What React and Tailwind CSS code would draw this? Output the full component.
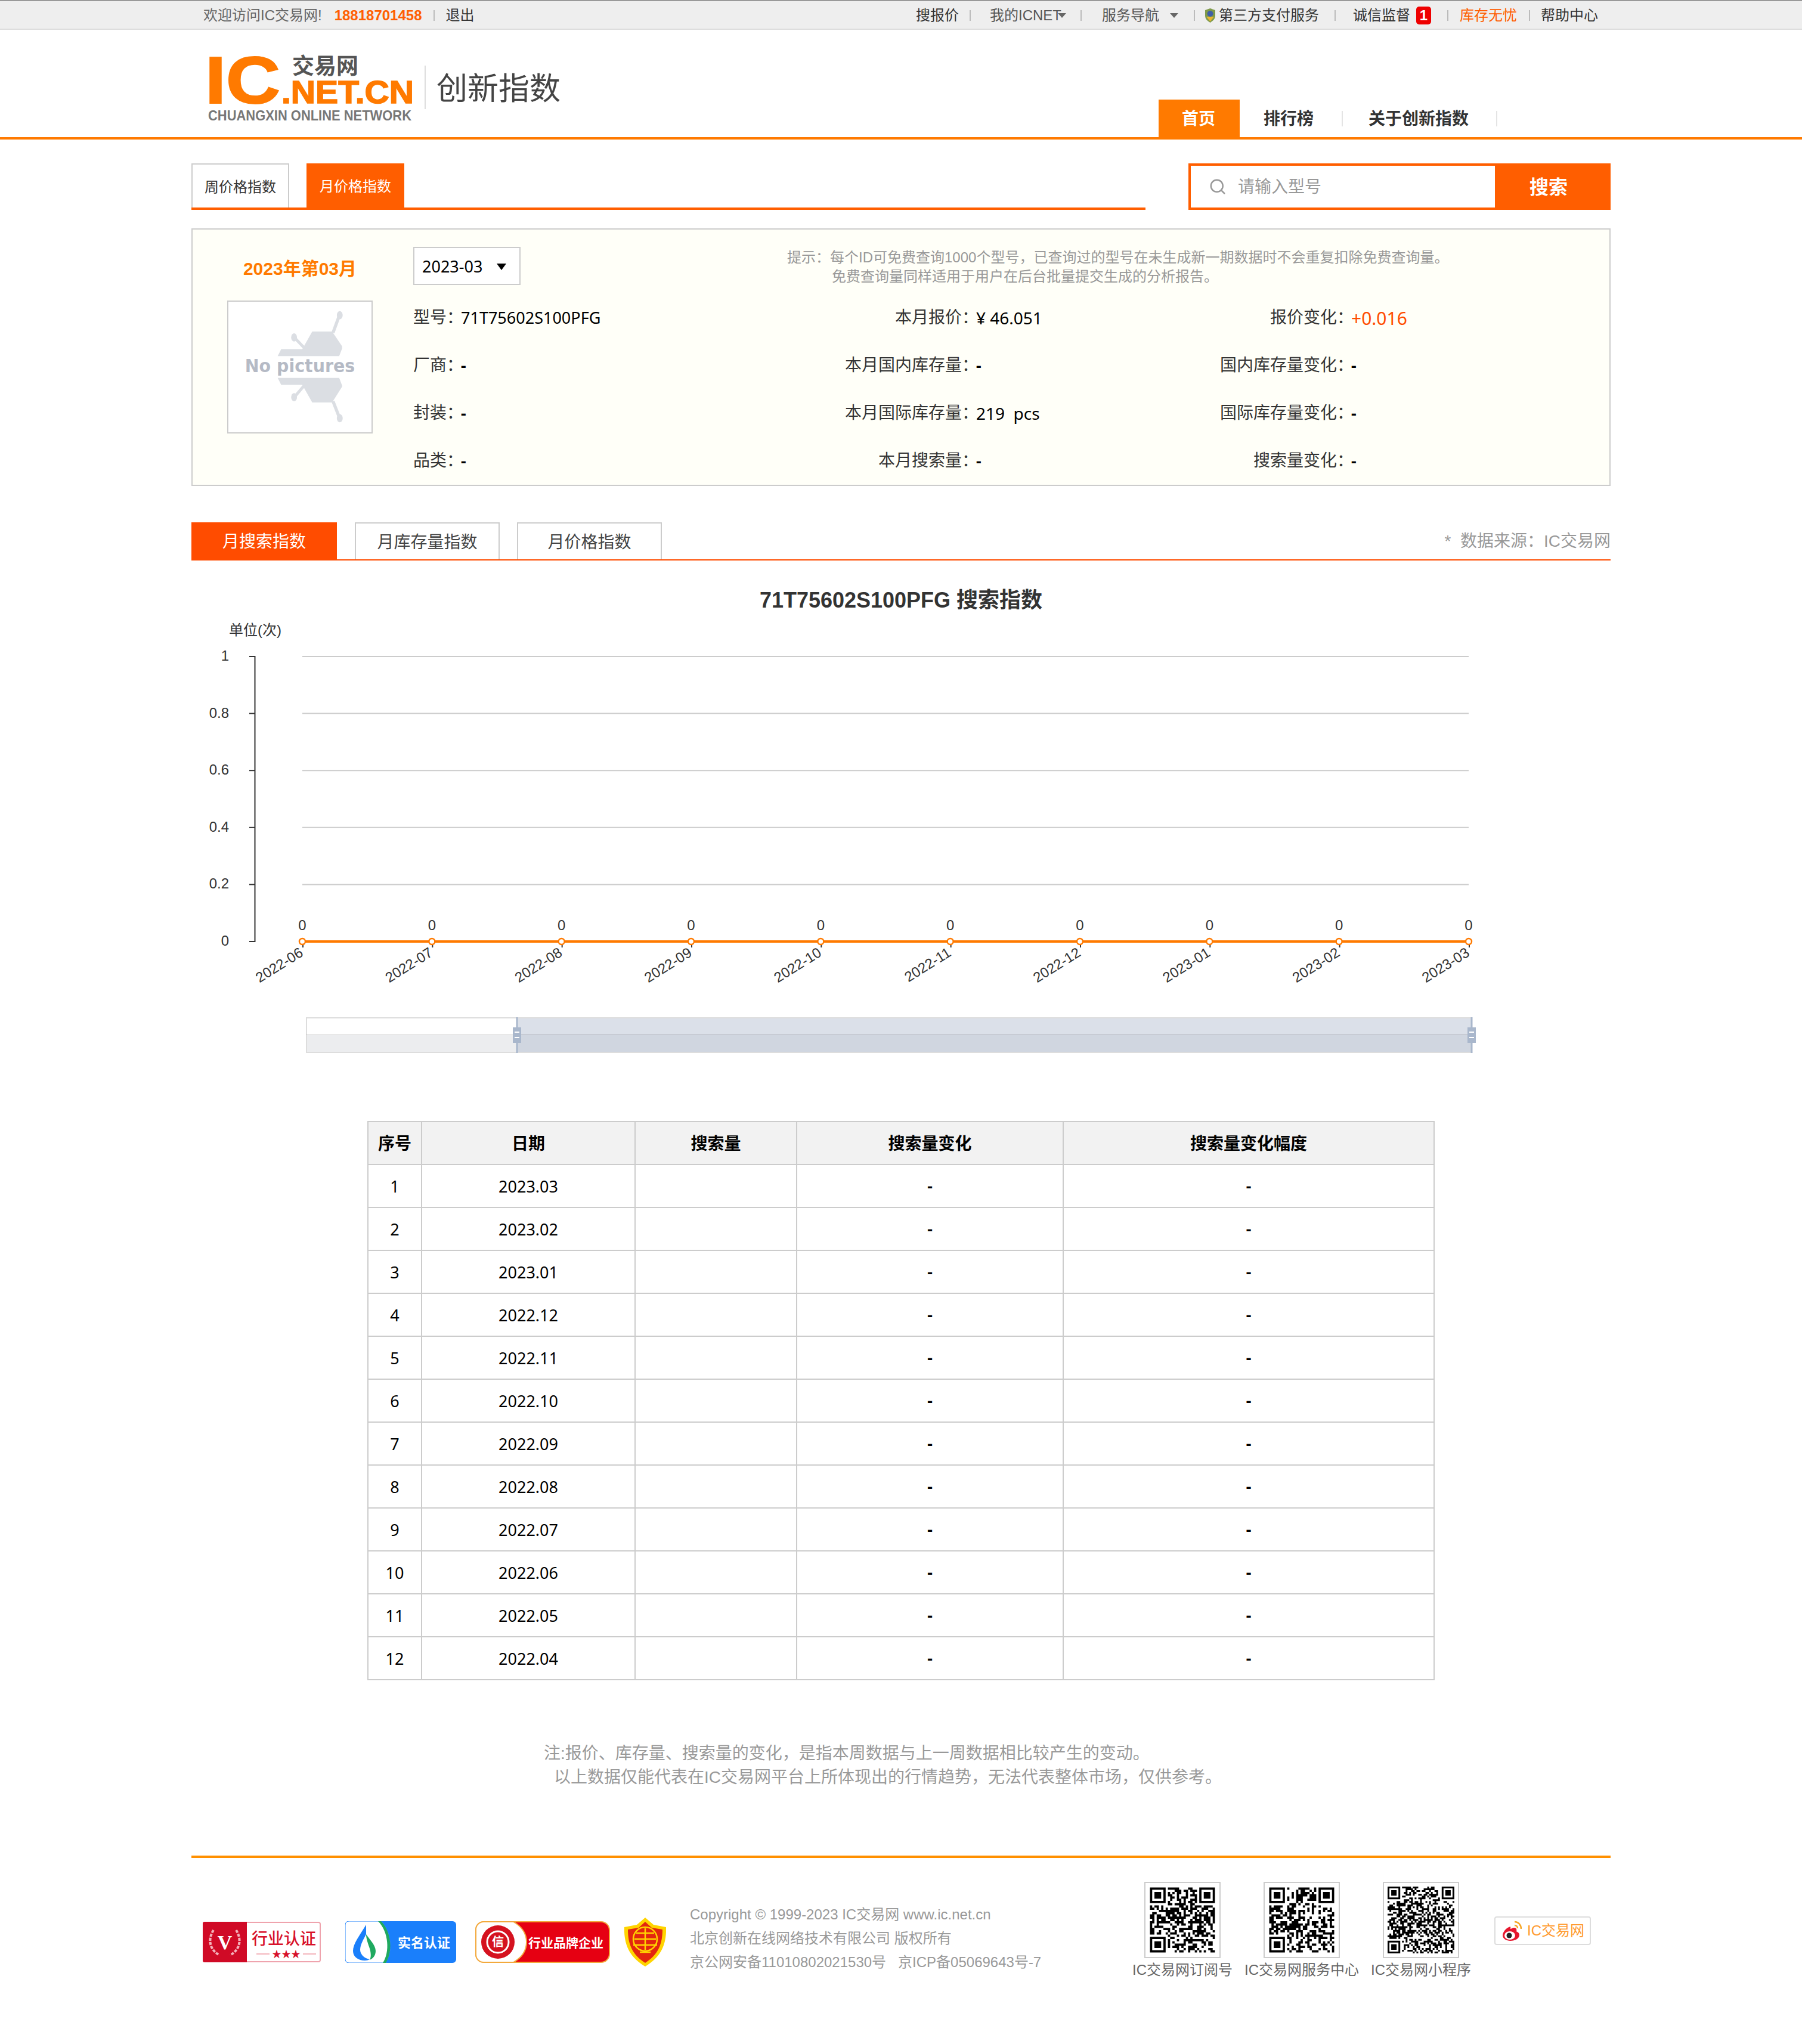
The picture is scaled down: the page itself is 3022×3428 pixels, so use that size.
import { Search } from 'lucide-react';

const ROWS = [
  ['型号\uFF1A', '71T75602S100PFG', '本月报价\uFF1A', '¥ 46.051', '报价变化\uFF1A', '+0.016'],
  ['厂商\uFF1A', '-', '本月国内库存量\uFF1A', '-', '国内库存量变化\uFF1A', '-'],
  ['封装\uFF1A', '-', '本月国际库存量\uFF1A', '219  pcs', '国际库存量变化\uFF1A', '-'],
  ['品类\uFF1A', '-', '本月搜索量\uFF1A', '-', '搜索量变化\uFF1A', '-'],
];
const DATES = ['2023.03', '2023.02', '2023.01', '2022.12', '2022.11', '2022.10', '2022.09', '2022.08', '2022.07', '2022.06', '2022.05', '2022.04'];
const MONTHS = ['2022-06', '2022-07', '2022-08', '2022-09', '2022-10', '2022-11', '2022-12', '2023-01', '2023-02', '2023-03'];
const Y_TICKS = [['1', 1101], ['0.8', 1196.6], ['0.6', 1292.2], ['0.4', 1387.8], ['0.2', 1483.4], ['0', 1579]];

const HINT_1 = '提示\uFF1A每个ID可免费查询1000个型号\uFF0C已查询过的型号在未生成新一期数据时不会重复扣除免费查询量。';
const HINT_2 = '免费查询量同样适用于用户在后台批量提交生成的分析报告。';
const NOTE_1 = '注:报价、库存量、搜索量的变化\uFF0C是指本周数据与上一周数据相比较产生的变动。';
const NOTE_2 = '以上数据仅能代表在IC交易网平台上所体现出的行情趋势\uFF0C无法代表整体市场\uFF0C仅供参考。';

function Sep({ className = '' }) {
  return <span className={`h-[18px] w-[2px] bg-[#bbb] ${className}`} />;
}

function Logo() {
  return (
    <svg width="371" height="148" viewBox="0 0 371 148" className="mt-[15px] ml-[20px] shrink-0">
      <text x="3" y="108" fontSize="112" fontWeight="700" fill="#ff7a00" stroke="#ff7a00" strokeWidth="2" textLength="126" lengthAdjust="spacingAndGlyphs">IC</text>
      <text x="131" y="108" fontSize="53" fontWeight="700" fill="#ff7a00" stroke="#ff7a00" strokeWidth="1.5" textLength="222" lengthAdjust="spacingAndGlyphs">.NET.CN</text>
      <text x="149" y="59" fontSize="37" fontWeight="700" fill="#555">交易网</text>
      <text x="8" y="137" fontSize="24" fontWeight="700" fill="#777" textLength="341" lengthAdjust="spacingAndGlyphs">CHUANGXIN ONLINE NETWORK</text>
    </svg>
  );
}

function NoPicture() {
  return (
    <svg width="244" height="223" viewBox="0 0 244 223" className="border-2 border-[#ccc] bg-white">
      <g fill="#dbdee3">
        <path d="M143 51h34l17 25v4l-5 13H84l6-12h36z" />
        <path d="M84 130h105l5 13v2l-17 27h-34l-17-30H90z" />
        <path d="M176 52l11-30 5 2-11 30zM127 80l-17-18 4-3 17 18zM176 171l11 28 5-2-11-28zM127 142l-17 20 4 3 17-20z" />
        <ellipse cx="190" cy="23" rx="5" ry="7" />
        <ellipse cx="112" cy="61" rx="5" ry="7" />
        <ellipse cx="112" cy="163" rx="5" ry="7" />
        <ellipse cx="190" cy="199" rx="5" ry="7" />
      </g>
      <text x="122" y="120" textAnchor="middle" fontSize="31" fontWeight="700" fill="#b5bac5" textLength="188" lengthAdjust="spacingAndGlyphs" className="font-['DejaVu_Sans',sans-serif]">No pictures</text>
    </svg>
  );
}

function Chart() {
  return (
    <svg width="2380" height="850" viewBox="321 940 2380 850" className="block">
      <text x="1511" y="1019" textAnchor="middle" fontSize="36" fontWeight="700" fill="#333">71T75602S100PFG 搜索指数</text>
      <text x="384" y="1065" fontSize="24" fill="#333">单位(次)</text>
      {Y_TICKS.map(([label, y]) => (
        <g key={label}>
          {label !== '0' && <line x1="507" x2="2463" y1={y} y2={y} stroke="#ccc" strokeWidth="2" />}
          <line x1="418" x2="428" y1={y} y2={y} stroke="#333" strokeWidth="2" />
          <text x="384" y={y + 7} textAnchor="end" fontSize="24" fill="#333">{label}</text>
        </g>
      ))}
      <line x1="427.5" x2="427.5" y1="1100" y2="1580" stroke="#333" strokeWidth="2" />
      <line x1="507" x2="2463" y1="1579" y2="1579" stroke="#ff7a00" strokeWidth="4" />
      {MONTHS.map((month, i) => {
        const x = 507 + i * 217.33;
        return (
          <g key={month}>
            <line x1={x + 1} x2={x + 1} y1="1579" y2="1589" stroke="#333" strokeWidth="2" />
            <circle cx={x} cy="1579" r="5" fill="#fff" stroke="#ff7a00" strokeWidth="2.5" />
            <text x={x} y="1560" textAnchor="middle" fontSize="24" fill="#333">0</text>
            <text x={x + 3} y="1602" textAnchor="end" fontSize="24" fill="#333" transform={`rotate(-32 ${x + 3} 1602)`}>{month}</text>
          </g>
        );
      })}
      {/* data zoom */}
      <rect x="514" y="1707" width="953" height="29" fill="#fff" />
      <rect x="514" y="1736" width="953" height="29" fill="#ecedef" />
      <rect x="867" y="1707" width="1600" height="29" fill="#dbe0e9" />
      <rect x="867" y="1736" width="1600" height="29" fill="#d0d6e0" />
      <rect x="514" y="1707" width="1954" height="58" fill="none" stroke="#ddd" strokeWidth="2" />
      <line x1="514" x2="2467" y1="1735" y2="1735" stroke="#000" strokeOpacity="0.09" strokeWidth="2" />
      {[867, 2468].map((x) => (
        <g key={x}>
          <rect x={x - 1.5} y="1706" width="3" height="60" fill="#a9b7cc" />
          <rect x={x - 7} y="1723" width="14" height="26" fill="#a9b7cc" />
          <rect x={x - 4} y="1730" width="8" height="2" fill="#fff" />
          <rect x={x - 4} y="1739" width="8" height="2" fill="#fff" />
        </g>
      ))}
    </svg>
  );
}

function QrCode({ modules, seed }) {
  let state = seed;
  const rand = () => {
    state = (state * 1103515245 + 12345) % 2147483648;
    return (state >> 12) % 100;
  };
  const inFinder = (x, y) =>
    (x < 8 && y < 8) || (x >= modules - 8 && y < 8) || (x < 8 && y >= modules - 8);
  let d = '';
  for (let y = 0; y < modules; y++) {
    for (let x = 0; x < modules; x++) {
      if (!inFinder(x, y) && rand() < 50) d += `M${x} ${y}h1v1h-1z`;
    }
  }
  const finder = [[0, 0], [modules - 7, 0], [0, modules - 7]];
  return (
    <svg width="128" height="128" viewBox={`-2 -2 ${modules + 4} ${modules + 4}`} className="border-2 border-[#ccc] bg-white">
      <path d={d} fill="#000" />
      {finder.map(([x, y]) => (
        <path key={`${x}-${y}`} fillRule="evenodd" d={`M${x} ${y}h7v7h-7zM${x + 1} ${y + 1}v5h5v-5zM${x + 2} ${y + 2}h3v3h-3z`} fill="#000" />
      ))}
    </svg>
  );
}

function Badges() {
  return (
    <>
      <svg width="198" height="68" viewBox="0 0 198 68" className="mt-[107px] ml-[19px] shrink-0">
        <rect x="1" y="1" width="196" height="66" rx="3" fill="#fff" stroke="#efa3ad" strokeWidth="2" />
        <path d="M3 0h71v68H3a3 3 0 0 1-3-3V3a3 3 0 0 1 3-3z" fill="#d00a26" />
        <path d="M18 14c-9 14-8 32 10 42M56 14c9 14 8 32-10 42" fill="none" stroke="#f3b3bb" strokeWidth="4" strokeDasharray="5 2" />
        <text x="37" y="46" textAnchor="middle" fontSize="34" fontWeight="700" fill="#fff" className="font-['Liberation_Serif',serif]">V</text>
        <text x="82" y="38" fontSize="27" fontWeight="500" fill="#d8112a">行业认证</text>
        <path d="M90 54h22M168 54h22" stroke="#f4b5bd" strokeWidth="2" />
        <text x="140" y="60" textAnchor="middle" fontSize="16" fill="#d8112a">★★★</text>
      </svg>
      <svg width="186" height="70" viewBox="0 0 186 70" className="mt-[106px] ml-[41px] shrink-0">
        <rect width="186" height="70" rx="6" fill="#1a7ffb" />
        <path d="M6 0h54c18 18 20 52 8 70H6a6 6 0 0 1-6-6V6a6 6 0 0 1 6-6z" fill="#fff" stroke="#1a7ffb" strokeWidth="1" />
        <path d="M60 0c18 18 20 52 8 70h-5c12-18 10-52-8-70z" fill="#1fa95f" />
        <path d="M35 6C24 24 13 38 13 50c0 10 9 16 20 16 3 0 6-1 8-2-10-2-16-9-16-16 0-9 6-18 10-26z" fill="#1a7ffb" />
        <path d="M35 22c5 8 16 18 16 28 0 8-5 13-10 15 3-5 2-14-1-22-2-6-5-14-5-21z" fill="#1fa95f" />
        <text x="88" y="44" fontSize="22" fontWeight="700" fill="#fff">实名认证</text>
      </svg>
      <svg width="226" height="70" viewBox="0 0 226 70" className="mt-[106px] ml-[32px] shrink-0">
        <rect x="1" y="1" width="224" height="68" rx="14" fill="#e60012" stroke="#f3a93c" strokeWidth="2" />
        <path d="M14 1h50c14 8 22 20 22 34S78 61 64 69H14A13 13 0 0 1 1 56V14A13 13 0 0 1 14 1z" fill="#fff" stroke="#f3a93c" strokeWidth="2" />
        <circle cx="38" cy="35" r="28" fill="#d5121f" />
        <circle cx="38" cy="35" r="18" fill="none" stroke="#fff" strokeWidth="3" />
        <text x="38" y="42" textAnchor="middle" fontSize="20" fontWeight="700" fill="#fff">信</text>
        <text x="89" y="44" fontSize="21" fontWeight="700" fill="#fff">行业品牌企业</text>
      </svg>
      <svg width="70" height="82" viewBox="0 0 70 82" className="mt-[100px] ml-[24px] shrink-0">
        <path d="M35 0l14 12 21 4c1 28-8 50-35 66C8 66-1 44 0 16l21-4z" fill="#ffd400" />
        <path d="M35 7l11 10 18 3c0 24-7 42-29 56C13 62 6 44 6 20l18-3z" fill="#e3260f" />
        <circle cx="35" cy="36" r="20" fill="none" stroke="#ffd400" strokeWidth="2.5" />
        <path d="M17 36h36M15 46h40M20 26h30M35 18v36M26 58h18" stroke="#ffd400" strokeWidth="2.5" fill="none" />
      </svg>
    </>
  );
}

function WeiboButton() {
  return (
    <div className="mt-[98px] ml-[23px] flex h-[48px] w-[162px] items-center gap-[9px] rounded-[4px] border-2 border-[#ddd] bg-white pl-[12px]">
      <svg width="32" height="34" viewBox="0 0 32 34" className="shrink-0">
        <path d="M13 10C6 12 0 19 0 25c0 5 6 9 13 9 8 0 15-4 15-10 0-4-4-5-5-6 1-3 0-6-4-6-2 0-5 2-6 2 1-3-1-5-0-4z" fill="#e6162d" />
        <ellipse cx="12" cy="25" rx="9" ry="7" fill="#fff" />
        <circle cx="11" cy="25" r="4.5" fill="#222" />
        <path d="M20 2c6 0 11 5 11 12M20 8c3 0 5 2 5 5" fill="none" stroke="#f6a623" strokeWidth="2.5" />
      </svg>
      <span className="text-[24px] leading-none text-[#ff9a2e]">IC交易网</span>
    </div>
  );
}

export default function App() {
  return (
    <div className="min-h-[3428px] bg-white font-['Liberation_Sans','Noto_Sans_CJK_SC',sans-serif]">
      {/* top bar */}
      <div className="h-[50px] border-t-2 border-b-2 border-t-[#999] border-b-[#ddd] bg-[#eee]">
        <div className="mx-auto flex h-full w-[2380px] items-center justify-between px-5 pt-[2px] text-[24px] text-[#555]">
          <div className="flex items-center">
            <span className="text-[#666]">欢迎访问IC交易网!</span>
            <span className="ml-[21px] font-bold text-[#ff5e00]">18818701458</span>
            <Sep className="ml-[19px]" />
            <span className="ml-[19px] text-[#333]">退出</span>
          </div>
          <div className="flex items-center">
            <span className="text-[#333]">搜报价</span>
            <Sep className="ml-[18px]" />
            <span className="ml-[32px]">我的ICNET</span>
            <span className="ml-[-6px] h-0 w-0 border-x-[7px] border-t-[8px] border-x-transparent border-t-[#666]" />
            <Sep className="ml-[24px]" />
            <span className="ml-[34px]">服务导航</span>
            <span className="ml-[18px] h-0 w-0 border-x-[7px] border-t-[8px] border-x-transparent border-t-[#666]" />
            <Sep className="ml-[26px]" />
            <svg width="17" height="24" viewBox="0 0 17 24" className="ml-[17px]">
              <path d="M8.5 0L17 3v9c0 6-4 9-8.5 12C4 21 0 18 0 12V3z" fill="#7f9a4a" />
              <circle cx="8.5" cy="9" r="5" fill="#3f5fa8" />
              <path d="M2 14h13l-6.5 8z" fill="#e9b530" />
            </svg>
            <span className="ml-[6px] text-[#333]">第三方支付服务</span>
            <Sep className="ml-[26px]" />
            <span className="ml-[29px] text-[#333]">诚信监督</span>
            <span className="ml-[10px] flex h-[30px] w-[25px] items-center justify-center rounded-[5px] bg-[#ee0000] text-[24px] font-bold text-white">1</span>
            <Sep className="ml-[27px]" />
            <span className="ml-[19px] text-[#ff5e00]">库存无忧</span>
            <Sep className="ml-[20px]" />
            <span className="mr-[1px] ml-[18px] text-[#333]">帮助中心</span>
          </div>
        </div>
      </div>

      {/* header */}
      <div className="h-[184px] border-b-4 border-[#ff7a00]">
        <div className="mx-auto flex h-full w-[2380px] justify-between">
          <div className="flex items-start">
            <Logo />
            <span className="mt-[60px] h-[73px] w-[2px] bg-[#ddd]" />
            <h1 className="mt-[73px] ml-[18px] text-[52px] leading-[52px] font-normal text-[#444]">创新指数</h1>
          </div>
          <nav className="flex h-[63px] w-[758px] items-center self-end text-[28px] font-bold text-[#333]">
            <a className="flex h-full w-[136px] items-center justify-center bg-[#ff7a00] pt-[2px] pr-[2px] text-white">首页</a>
            <a className="ml-[40px] pt-[2px]">排行榜</a>
            <span className="ml-[47px] h-[26px] w-[2px] bg-[#e4e4e4]" />
            <a className="ml-[43px] pt-[2px]">关于创新指数</a>
            <span className="ml-[46px] h-[26px] w-[2px] bg-[#e4e4e4]" />
          </nav>
        </div>
      </div>

      <div className="mx-auto w-[2380px]">
        {/* period tabs + search */}
        <div className="mt-[40px] flex h-[78px] justify-between">
          <div className="flex h-full w-[1600px] items-end border-b-4 border-[#ff5e00] text-[24px]">
            <a className="flex h-[74px] w-[164px] items-center justify-center border-x-2 border-t-2 border-[#ccc] pt-[3px] text-[#333]">周价格指数</a>
            <a className="ml-[29px] flex h-[74px] w-[164px] items-center justify-center bg-[#ff5e00] pt-[3px] text-white">月价格指数</a>
          </div>
          <div className="flex h-full w-[708px] border-4 border-r-0 border-[#ff5e00]">
            <div className="flex flex-1 items-center pl-[30px] text-[28px] text-[#999]">
              <Search size={30} strokeWidth={2} className="text-[#999]" />
              <span className="ml-[19px] pt-[2px]">请输入型号</span>
            </div>
            <button className="flex w-[194px] items-center justify-center bg-[#ff5e00] pt-[2px] pr-[14px] text-[32px] font-bold text-white">搜索</button>
          </div>
        </div>

        {/* info panel */}
        <div className="mt-[31px] flex h-[432px] border-2 border-[#ccc] bg-[#fffff8] text-[28px] text-[#333]">
          <div className="w-[370px] shrink-0 pl-[58px]">
            <div className="mt-[48px] w-[244px] text-center text-[30px] leading-[36px] font-bold text-[#ff7a00]">2023年第03月</div>
            <div className="mt-[35px]">
              <NoPicture />
            </div>
          </div>
          <div className="flex-1">
            <div className="flex items-start pt-[29px]">
              <div className="flex h-[64px] w-[180px] items-center border-2 border-[#ccc] bg-white pt-[2px] pl-[13px] font-['Noto_Sans',sans-serif] text-black">
                <span className="text-[27px]">2023-03</span>
                <span className="ml-[24px] h-0 w-0 border-x-[8px] border-t-[11px] border-x-transparent border-t-black" />
              </div>
              <div className="mt-[2px] ml-[447px] text-[24px] leading-[32px] text-[#999]">
                <div>{HINT_1}</div>
                <div className="ml-[75px]">{HINT_2}</div>
              </div>
            </div>
            <div className="mt-[13px]">
              {ROWS.map((row) => (
                <div key={row[0]} className="flex h-[80px] items-center">
                  <div className="flex w-[620px] items-center">
                    <span>{row[0]}</span>
                    <span className={`ml-[-4px] font-['Noto_Sans',sans-serif] text-[27px] text-black ${row[1] === '-' ? 'font-bold' : ''}`}>{row[1]}</span>
                  </div>
                  <div className="flex w-[629px] items-center">
                    <span className="w-[328px] text-right">{row[2]}</span>
                    <span className={`ml-[-4px] font-['Noto_Sans',sans-serif] whitespace-pre text-black ${row[3] === '-' ? 'text-[27px] font-bold' : 'text-[28px]'}`}>{row[3]}</span>
                  </div>
                  <div className="flex items-center">
                    <span className="w-[328px] text-right">{row[4]}</span>
                    <span className={`ml-[-4px] font-['Noto_Sans',sans-serif] ${row[5] === '-' ? 'text-[27px] font-bold text-black' : 'text-[30px] text-[#ff4c00]'}`}>{row[5]}</span>
                  </div>
                </div>
              ))}
            </div>
          </div>
        </div>

        {/* chart tabs */}
        <div className="mt-[61px] flex h-[64px] items-end justify-between border-b-2 border-[#ff4c00] text-[28px]">
          <div className="flex">
            <a className="flex h-[62px] w-[244px] items-center justify-center bg-[#ff4c00] pt-[4px] text-white">月搜索指数</a>
            <a className="ml-[30px] flex h-[62px] w-[243px] items-center justify-center border-x-2 border-t-2 border-[#ccc] pt-[4px] text-[#444]">月库存量指数</a>
            <a className="ml-[29px] flex h-[62px] w-[243px] items-center justify-center border-x-2 border-t-2 border-[#ccc] pt-[4px] text-[#444]">月价格指数</a>
          </div>
          <span className="h-[62px] leading-[64px] whitespace-pre text-[#999]">{'*  数据来源\uFF1AIC交易网'}</span>
        </div>

        <Chart />

        {/* table */}
        <table className="mt-[90px] ml-[295px] w-[1788px] table-fixed border-collapse border-2 border-[#ccc] text-center text-[28px] text-black">
          <colgroup>
            <col className="w-[90px]" />
            <col className="w-[358px]" />
            <col className="w-[271px]" />
            <col className="w-[447px]" />
            <col className="w-[622px]" />
          </colgroup>
          <thead>
            <tr className="h-[72px] bg-[#f2f2f2]">
              {['序号', '日期', '搜索量', '搜索量变化', '搜索量变化幅度'].map((h) => (
                <th key={h} className="border-2 border-[#ccc] pt-[4px] font-bold">{h}</th>
              ))}
            </tr>
          </thead>
          <tbody className="font-['Noto_Sans',sans-serif] text-[27px]">
            {DATES.map((date, i) => (
              <tr key={date} className="h-[72px]">
                <td className="border-2 border-[#ccc] pt-[2px]">{i + 1}</td>
                <td className="border-2 border-[#ccc] pt-[2px]">{date}</td>
                <td className="border-2 border-[#ccc]"></td>
                <td className="border-2 border-[#ccc] font-bold">-</td>
                <td className="border-2 border-[#ccc] font-bold">-</td>
              </tr>
            ))}
          </tbody>
        </table>

        {/* note */}
        <div className="mt-[103px] ml-[591px] text-[28px] leading-[40px] text-[#999]">
          <div>{NOTE_1}</div>
          <div className="ml-[17px]">{NOTE_2}</div>
        </div>

        {/* footer */}
        <div className="mt-[111px] flex items-start border-t-4 border-[#ff9000]">
          <Badges />
          <div className="mt-[75px] ml-[40px] w-[726px] text-[24px] leading-[40px] text-[#999]">
            <div>Copyright © 1999-2023 IC交易网 www.ic.net.cn</div>
            <div>北京创新在线网络技术有限公司 版权所有</div>
            <div className="whitespace-pre">京公网安备11010802021530号   京ICP备05069643号-7</div>
          </div>
          {[['IC交易网订阅号', 29, 7], ['IC交易网服务中心', 29, 91], ['IC交易网小程序', 37, 415]].map(([label, modules, seed]) => (
            <div key={label} className="mt-[40px] flex w-[200px] flex-col items-center text-[24px] leading-[32px] whitespace-nowrap text-[#666]">
              <QrCode modules={modules} seed={seed} />
              <span className="mt-[4px]">{label}</span>
            </div>
          ))}
          <WeiboButton />
        </div>
      </div>
    </div>
  );
}
